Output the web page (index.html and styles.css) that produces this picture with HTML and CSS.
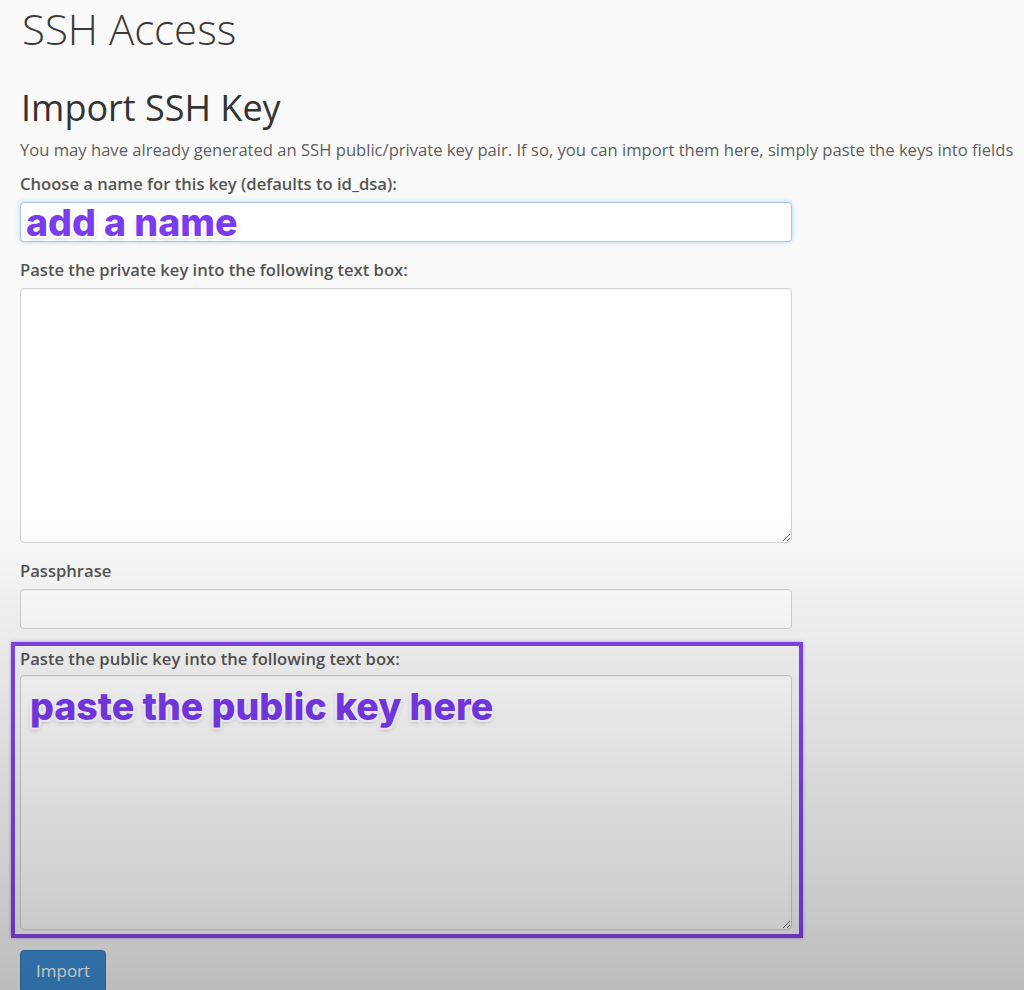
FILE: index.html
```html
<!DOCTYPE html>
<html lang="en">
<head>
  <meta charset="UTF-8">
  <meta name="viewport" content="width=device-width, initial-scale=1.0">
  <title>SSH Access - Import SSH Key</title>
  <link rel="stylesheet" href="styles.css">
</head>
<body>
  <h1 class="page-title">SSH Access</h1>

  <h2 class="section-title">Import SSH Key</h2>
  <p class="intro">You may have already generated an SSH public/private key pair. If so, you can import them here, simply paste the keys into fields</p>

  <form class="import-form" onsubmit="return false;">
    <div class="form-group">
      <label for="key-name">Choose a name for this key (defaults to id_dsa):</label>
      <div class="field-wrap">
        <input type="text" id="key-name" class="form-control focused">
        <span class="note note-name">add a name</span>
      </div>
    </div>

    <div class="form-group">
      <label for="private-key">Paste the private key into the following text box:</label>
      <textarea id="private-key" class="form-control key-box"></textarea>
    </div>

    <div class="form-group">
      <label for="passphrase">Passphrase</label>
      <input type="password" id="passphrase" class="form-control">
    </div>

    <!-- highlighted in the tutorial -->
    <div class="form-group highlight">
      <label for="public-key">Paste the public key into the following text box:</label>
      <textarea id="public-key" class="form-control key-box"></textarea>
      <span class="note note-public">paste the public key here</span>
    </div>

    <button type="submit" class="btn-primary">Import</button>
  </form>
</body>
</html>
```

FILE: styles.css
```css
body {
  font-family: 'Open Sans', 'Liberation Sans', sans-serif;
  font-size: 16.6px;
  line-height: 20px;
  color: #555;
  background: #f9f9f9;
  margin: 0;
  padding: 0 20px;
  overflow: hidden;
}
/* video darkening toward the bottom of the frame */
body::after {
  content: '';
  position: fixed;
  top: 0;
  left: 0;
  right: 0;
  bottom: 0;
  pointer-events: none;
  background: linear-gradient(to bottom,
    rgba(0,0,0,0) 0%,
    rgba(0,0,0,0) 52%,
    rgba(0,0,0,0.045) 61.5%,
    rgba(0,0,0,0.085) 70.5%,
    rgba(0,0,0,0.2) 93%,
    rgba(0,0,0,0.245) 100%);
  z-index: 10;
}
.page-title {
  font-size: 42px;
  font-weight: 300;
  line-height: 46px;
  color: #3a3a3a;
  margin: 6px 0 0 2px;
}
.section-title {
  font-size: 36px;
  font-weight: 400;
  line-height: 38px;
  color: #333;
  margin: 37px 0 0 1px;
}
.intro {
  margin: 13px 0 0;
  color: #5e5e5e;
  white-space: nowrap;
}
.import-form {
  width: 772px;
  margin-top: 14px;
}
.form-group {
  margin-bottom: 18px;
}
.form-group label {
  display: block;
  font-weight: 600;
  color: #555;
  margin-bottom: 8px;
}
.form-control {
  display: block;
  box-sizing: border-box;
  width: 100%;
  height: 40px;
  padding: 6px 12px;
  font-family: inherit;
  font-size: 16px;
  background: #fff;
  border: 1px solid #d2d2d2;
  border-radius: 4px;
  box-shadow: inset 0 1px 1px rgba(0,0,0,0.04);
}
.form-control.focused {
  border-color: #a7c6e4;
  box-shadow: 0 0 5px rgba(102,175,233,0.45);
}
.key-box {
  height: 255px;
  resize: vertical;
}
.field-wrap {
  position: relative;
}
.note {
  position: absolute;
  font-family: Inter, 'Liberation Sans', sans-serif;
  font-weight: 800;
  font-size: 37.5px;
  line-height: 40px;
  color: #7b3bf0;
  white-space: nowrap;
  letter-spacing: 0;
  text-shadow:
    2px 0 0 #fff, -2px 0 0 #fff, 0 2px 0 #fff, 0 -2px 0 #fff,
    2px 2px 0 #fff, -2px -2px 0 #fff, 2px -2px 0 #fff, -2px 2px 0 #fff,
    0 2px 5px rgba(0,0,0,0.3);
  z-index: 5;
}
.note-name {
  top: 1px;
  left: 6px;
}
.highlight {
  position: relative;
  margin-top: 20px;
  margin-bottom: 20px;
}
.highlight label {
  margin-bottom: 6px;
}
.highlight::before {
  content: '';
  position: absolute;
  top: -7px;
  left: -9px;
  right: -11px;
  bottom: -8px;
  border: 4px solid #8345ea;
  box-shadow: 0 0 3px rgba(131,69,234,0.5);
  pointer-events: none;
}
.note-public {
  top: 38px;
  left: 10px;
}
.btn-primary {
  background: #3d8fd6;
  color: #fff;
  border: 1px solid #347dbd;
  border-radius: 4px;
  font-family: inherit;
  font-size: 17px;
  line-height: 22px;
  padding: 9px 15px 10px;
  cursor: pointer;
}
```
